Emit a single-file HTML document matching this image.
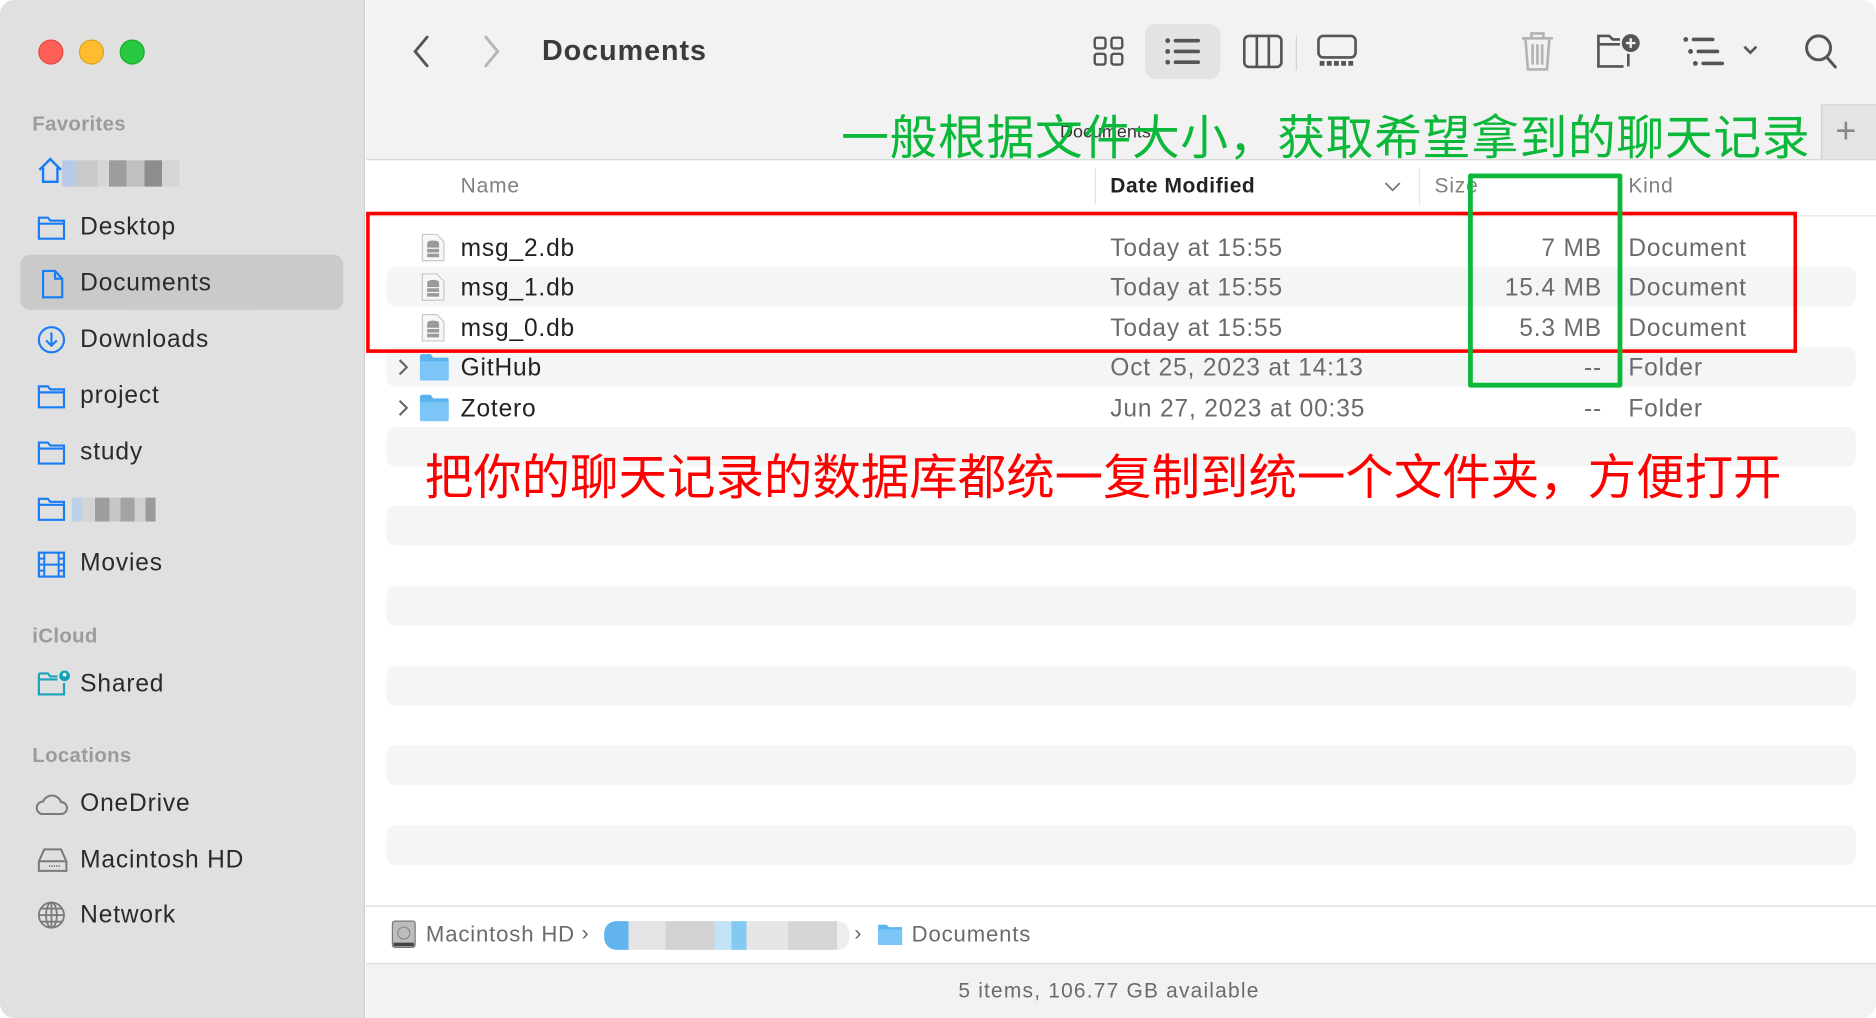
<!DOCTYPE html>
<html><head><meta charset="utf-8"><style>
*{margin:0;padding:0;box-sizing:border-box}
html,body{width:1876px;height:1018px;overflow:hidden;background:#fff}
#w{position:absolute;left:0;top:0;width:1568px;height:851px;transform:scale(1.19643,1.19624);transform-origin:0 0;font-family:"Liberation Sans","Noto Sans CJK SC",sans-serif;color:#222;border-radius:12px;overflow:hidden;background:#fff;letter-spacing:0.7px}
.a{position:absolute}
.sb{left:0;top:0;width:305px;height:851px;background:#e0e0e0;border-right:1px solid #d0d0d0}
.sec{position:absolute;left:27px;font-size:17px;color:#9b9b9b;font-weight:bold;letter-spacing:0.3px}
.it{position:absolute;left:67px;font-size:20.5px;color:#2a2a2a;line-height:24px}
.ic{position:absolute;left:31px}
.tb{left:306px;top:0;width:1262px;height:134px;background:#f2f2f2;border-bottom:1px solid #d6d6d6}
.hdr{font-size:17.5px;color:#808080;top:145px}
.row{position:absolute;left:323px;width:1228px;height:33px;border-radius:7px;background:#f4f5f5}
.t{position:absolute;font-size:20.5px;line-height:24px}
.g{color:#6b6b6b}
</style></head><body><div id="w">
<div class="a sb"></div>
<div class="a" style="left:32px;top:33px;width:21px;height:21px;border-radius:50%;background:#fe5f57;border:1px solid #e2463f"></div>
<div class="a" style="left:66px;top:33px;width:21px;height:21px;border-radius:50%;background:#febc2e;border:1px solid #dea123"></div>
<div class="a" style="left:100px;top:33px;width:21px;height:21px;border-radius:50%;background:#28c840;border:1px solid #1aab29"></div>

<div class="sec" style="top:94px">Favorites</div>
<svg class="ic" style="top:130px" width="22" height="24" viewBox="0 0 22 24"><path d="M2 12 L11 3 L20 12 M5 10 V22 H17 V10" fill="none" stroke="#1a7cf5" stroke-width="2"/></svg>
<div class="a" style="left:52px;top:134px;width:98px;height:22px;background:linear-gradient(90deg,#b8cbe6 0 12%,#c9c9c9 12% 30%,#d6d6d6 30% 40%,#9d9d9d 40% 55%,#c0c0c0 55% 70%,#8d8d8d 70% 85%,#d5d5d5 85%)"></div>
<div class="a" style="left:17px;top:213px;width:270px;height:46px;border-radius:8px;background:#cacaca"></div>
<svg class="ic" style="top:179px" width="24" height="22" viewBox="0 0 24 22"><path d="M1.5 3 H9 L11 5.5 H22.5 V20.5 H1.5 Z M1.5 8 H22.5" fill="none" stroke="#1a7cf5" stroke-width="1.8"/></svg>
<div class="it" style="top:178px">Desktop</div>
<svg class="ic" style="top:225px;left:34px" width="20" height="25" viewBox="0 0 20 25"><path d="M2 1.5 H12 L18 8 V23.5 H2 Z M12 1.5 V8 H18" fill="none" stroke="#1a7cf5" stroke-width="1.8"/></svg>
<div class="it" style="top:225px">Documents</div>
<svg class="ic" style="top:272px" width="24" height="24" viewBox="0 0 24 24"><circle cx="12" cy="12" r="10.5" fill="none" stroke="#1a7cf5" stroke-width="1.8"/><path d="M12 6 V17 M7.5 12.5 L12 17 L16.5 12.5" fill="none" stroke="#1a7cf5" stroke-width="1.8"/></svg>
<div class="it" style="top:272px">Downloads</div>
<svg class="ic" style="top:320px" width="24" height="22" viewBox="0 0 24 22"><path d="M1.5 3 H9 L11 5.5 H22.5 V20.5 H1.5 Z M1.5 8 H22.5" fill="none" stroke="#1a7cf5" stroke-width="1.8"/></svg>
<div class="it" style="top:319px">project</div>
<svg class="ic" style="top:367px" width="24" height="22" viewBox="0 0 24 22"><path d="M1.5 3 H9 L11 5.5 H22.5 V20.5 H1.5 Z M1.5 8 H22.5" fill="none" stroke="#1a7cf5" stroke-width="1.8"/></svg>
<div class="it" style="top:366px">study</div>
<svg class="ic" style="top:414px" width="24" height="22" viewBox="0 0 24 22"><path d="M1.5 3 H9 L11 5.5 H22.5 V20.5 H1.5 Z M1.5 8 H22.5" fill="none" stroke="#1a7cf5" stroke-width="1.8"/></svg>
<div class="a" style="left:60px;top:416px;width:70px;height:20px;background:linear-gradient(90deg,#bccfe9 0 12%,#d4d4d4 12% 28%,#9e9e9e 28% 45%,#c6c6c6 45% 58%,#a3a3a3 58% 75%,#d0d0d0 75% 88%,#9a9a9a 88%)"></div>
<svg class="ic" style="top:460px" width="24" height="24" viewBox="0 0 24 24"><rect x="1.5" y="2" width="21" height="20" fill="none" stroke="#1a7cf5" stroke-width="1.8"/><path d="M6 2 V22 M18 2 V22 M6 12 H18 M1.5 7 H6 M1.5 12 H6 M1.5 17 H6 M18 7 H22.5 M18 12 H22.5 M18 17 H22.5" stroke="#1a7cf5" stroke-width="1.6"/></svg>
<div class="it" style="top:459px">Movies</div>

<div class="sec" style="top:522px">iCloud</div>
<svg class="ic" style="top:560px" width="28" height="22" viewBox="0 0 28 22"><path d="M1.5 3 H9 L11 5.5 H17 M22.5 11 V20.5 H1.5 V3 M1.5 8 H17" fill="none" stroke="#16a3b9" stroke-width="1.8"/><circle cx="23" cy="5" r="4.5" fill="#16a3b9"/><circle cx="23" cy="4" r="1.5" fill="#fff"/></svg>
<div class="it" style="top:560px">Shared</div>

<div class="sec" style="top:622px">Locations</div>
<svg class="ic" style="top:662px;left:29px" width="28" height="20" viewBox="0 0 28 20"><path d="M6 18.5 H22 A5 5 0 0 0 22 8.5 A8 8 0 0 0 7 8 A5.3 5.3 0 0 0 6 18.5 Z" fill="none" stroke="#7a7a7a" stroke-width="1.7"/></svg>
<div class="it" style="top:660px">OneDrive</div>
<svg class="ic" style="top:708px" width="26" height="22" viewBox="0 0 26 22"><path d="M6 2 H20 L24.5 12 V20 H1.5 V12 Z M1.5 12 H24.5" fill="none" stroke="#7a7a7a" stroke-width="1.7"/><path d="M10 16 H20" stroke="#7a7a7a" stroke-width="1.5" stroke-dasharray="1 1"/></svg>
<div class="it" style="top:707px">Macintosh HD</div>
<svg class="ic" style="top:753px" width="24" height="24" viewBox="0 0 24 24"><g fill="none" stroke="#7a7a7a" stroke-width="1.5"><circle cx="12" cy="12" r="10.5"/><ellipse cx="12" cy="12" rx="4.5" ry="10.5"/><path d="M1.5 12 H22.5 M3.5 6.5 H20.5 M3.5 17.5 H20.5 M12 1.5 V22.5"/></g></svg>
<div class="it" style="top:753px">Network</div>

<!-- toolbar + tab -->
<div class="a tb"></div>
<svg class="a" style="left:343px;top:29px" width="18" height="28" viewBox="0 0 18 28"><path d="M14 2 L4 14 L14 26" fill="none" stroke="#555" stroke-width="2.4" stroke-linecap="round"/></svg>
<svg class="a" style="left:402px;top:29px" width="18" height="28" viewBox="0 0 18 28"><path d="M4 2 L14 14 L4 26" fill="none" stroke="#b5b5b5" stroke-width="2.4" stroke-linecap="round"/></svg>
<div class="a" style="left:453px;top:29px;font-size:24px;font-weight:bold;color:#3b3b3b;letter-spacing:0.8px">Documents</div>
<svg class="a" style="left:913px;top:30px" width="28" height="26" viewBox="0 0 28 26"><g fill="none" stroke="#555" stroke-width="2"><rect x="2" y="1.5" width="9" height="9" rx="2"/><rect x="16" y="1.5" width="9" height="9" rx="2"/><rect x="2" y="15" width="9" height="9" rx="2"/><rect x="16" y="15" width="9" height="9" rx="2"/></g></svg>
<div class="a" style="left:957px;top:20px;width:63px;height:46px;border-radius:9px;background:#e3e3e3"></div>
<svg class="a" style="left:972px;top:30px" width="34" height="26" viewBox="0 0 34 26"><g fill="#555"><circle cx="4" cy="4" r="2"/><circle cx="4" cy="13" r="2"/><circle cx="4" cy="22" r="2"/><rect x="9" y="2.5" width="22" height="3" rx="1.5"/><rect x="9" y="11.5" width="22" height="3" rx="1.5"/><rect x="9" y="20.5" width="22" height="3" rx="1.5"/></g></svg>
<svg class="a" style="left:1038px;top:28px" width="36" height="30" viewBox="0 0 36 30"><g fill="none" stroke="#555" stroke-width="2.2"><rect x="2" y="2" width="31" height="26" rx="4"/><path d="M12.5 2 V28 M22.5 2 V28"/></g></svg>
<div class="a" style="left:1083px;top:30px;width:1px;height:29px;background:#d2d2d2"></div>
<svg class="a" style="left:1100px;top:28px" width="36" height="30" viewBox="0 0 36 30"><g fill="none" stroke="#555" stroke-width="2.2"><rect x="2" y="2" width="31" height="18" rx="4"/></g><path d="M3 25 H33" stroke="#555" stroke-width="4" stroke-dasharray="4 2"/></svg>
<svg class="a" style="left:1270px;top:26px" width="30" height="34" viewBox="0 0 30 34"><g fill="none" stroke="#b3b3b3" stroke-width="2.2"><path d="M2 6 H28 M10 6 V2 H20 V6 M5 6 L7 32 H23 L25 6 M11 11 V28 M15 11 V28 M19 11 V28"/></g></svg>
<svg class="a" style="left:1334px;top:27px" width="38" height="32" viewBox="0 0 38 32"><g fill="none" stroke="#555" stroke-width="2.2"><path d="M23 28.5 H2 V3 H11 L14 6 H20 M2 10 H20 M27 18 V28.5"/><circle cx="29" cy="9" r="7.5" fill="#555" stroke="none"/><path d="M29 5 V13 M25 9 H33" stroke="#f2f2f2" stroke-width="2"/></g></svg>
<svg class="a" style="left:1406px;top:30px" width="64" height="26" viewBox="0 0 64 26"><g fill="#555"><circle cx="3" cy="3" r="2"/><circle cx="7" cy="13" r="2"/><circle cx="11" cy="23" r="2"/><rect x="8" y="1.5" width="19" height="3" rx="1.5"/><rect x="12" y="11.5" width="19" height="3" rx="1.5"/><rect x="16" y="21.5" width="19" height="3" rx="1.5"/></g><path d="M52 9 L57 14 L62 9" fill="none" stroke="#555" stroke-width="2.2"/></svg>
<svg class="a" style="left:1507px;top:27px" width="32" height="32" viewBox="0 0 32 32"><g fill="none" stroke="#555" stroke-width="2.5" stroke-linecap="round"><circle cx="13" cy="13" r="10"/><path d="M20 21 L27 29"/></g></svg>

<div class="a" style="left:1522px;top:87px;width:46px;height:46px;background:#e4e4e4;border-left:1px solid #d0d0d0;border-top:1px solid #d6d6d6"></div>
<div class="a" style="left:1534px;top:93px;font-size:30px;color:#888">+</div>
<div class="a" style="left:886px;top:102px;font-size:15px;color:#333;letter-spacing:0">Documents</div>

<!-- header -->
<div class="a hdr" style="left:385px">Name</div>
<div class="a" style="left:915px;top:141px;width:1px;height:30px;background:#e2e2e2"></div>
<div class="a hdr" style="left:928px;color:#222;font-weight:bold;letter-spacing:0.5px">Date Modified</div>
<svg class="a" style="left:1157px;top:151px" width="14" height="10" viewBox="0 0 14 10"><path d="M1 2 L7 8 L13 2" fill="none" stroke="#777" stroke-width="1.5"/></svg>
<div class="a" style="left:1186px;top:141px;width:1px;height:30px;background:#e2e2e2"></div>
<div class="a hdr" style="left:1199px">Size</div>
<div class="a hdr" style="left:1361px">Kind</div>
<div class="a" style="left:306px;top:180px;width:1262px;height:1px;background:#e4e4e4"></div>

<!-- stripes -->
<div class="row" style="top:223px"></div>
<div class="row" style="top:290px"></div>
<div class="row" style="top:357px"></div>
<div class="row" style="top:423px"></div>
<div class="row" style="top:490px"></div>
<div class="row" style="top:557px"></div>
<div class="row" style="top:623px"></div>
<div class="row" style="top:690px"></div>

<!-- rows -->
<svg class="a" style="left:352px;top:195px" width="20" height="24" viewBox="0 0 20 24"><path d="M1 1 H13 L19 7 V23 H1 Z" fill="#f7f7f7" stroke="#c8c8c8"/><g fill="#9a9a9a"><ellipse cx="10" cy="8" rx="5" ry="2"/><rect x="5" y="9" width="10" height="3"/><rect x="5" y="13" width="10" height="3"/><rect x="5" y="17" width="10" height="3"/></g></svg>
<svg class="a" style="left:352px;top:228px" width="20" height="24" viewBox="0 0 20 24"><path d="M1 1 H13 L19 7 V23 H1 Z" fill="#f7f7f7" stroke="#c8c8c8"/><g fill="#9a9a9a"><ellipse cx="10" cy="8" rx="5" ry="2"/><rect x="5" y="9" width="10" height="3"/><rect x="5" y="13" width="10" height="3"/><rect x="5" y="17" width="10" height="3"/></g></svg>
<svg class="a" style="left:352px;top:262px" width="20" height="24" viewBox="0 0 20 24"><path d="M1 1 H13 L19 7 V23 H1 Z" fill="#f7f7f7" stroke="#c8c8c8"/><g fill="#9a9a9a"><ellipse cx="10" cy="8" rx="5" ry="2"/><rect x="5" y="9" width="10" height="3"/><rect x="5" y="13" width="10" height="3"/><rect x="5" y="17" width="10" height="3"/></g></svg>
<div class="t" style="left:385px;top:196px">msg_2.db</div>
<div class="t" style="left:385px;top:229px">msg_1.db</div>
<div class="t" style="left:385px;top:263px">msg_0.db</div>
<div class="t" style="left:385px;top:296px">GitHub</div>
<div class="t" style="left:385px;top:330px">Zotero</div>
<svg class="a" style="left:332px;top:299px" width="10" height="16" viewBox="0 0 10 16"><path d="M2 2 L8 8 L2 14" fill="none" stroke="#666" stroke-width="1.8"/></svg>
<svg class="a" style="left:332px;top:333px" width="10" height="16" viewBox="0 0 10 16"><path d="M2 2 L8 8 L2 14" fill="none" stroke="#666" stroke-width="1.8"/></svg>
<svg class="a" style="left:350px;top:295px" width="26" height="24" viewBox="0 0 26 24"><path d="M1 3 Q1 1 3 1 H10 L12 4 H24 Q25 4 25 6 V22 Q25 23 24 23 H2 Q1 23 1 22 Z" fill="#5ab3ef"/><rect x="1" y="7" width="24" height="16" rx="1" fill="#7cc6f7"/></svg>
<svg class="a" style="left:350px;top:329px" width="26" height="24" viewBox="0 0 26 24"><path d="M1 3 Q1 1 3 1 H10 L12 4 H24 Q25 4 25 6 V22 Q25 23 24 23 H2 Q1 23 1 22 Z" fill="#5ab3ef"/><rect x="1" y="7" width="24" height="16" rx="1" fill="#7cc6f7"/></svg>
<div class="t g" style="left:928px;top:196px">Today at 15:55</div>
<div class="t g" style="left:928px;top:229px">Today at 15:55</div>
<div class="t g" style="left:928px;top:263px">Today at 15:55</div>
<div class="t g" style="left:928px;top:296px">Oct 25, 2023 at 14:13</div>
<div class="t g" style="left:928px;top:330px">Jun 27, 2023 at 00:35</div>
<div class="t g" style="right:229px;top:196px">7 MB</div>
<div class="t g" style="right:229px;top:229px">15.4 MB</div>
<div class="t g" style="right:229px;top:263px">5.3 MB</div>
<div class="t g" style="right:229px;top:296px">--</div>
<div class="t g" style="right:229px;top:330px">--</div>
<div class="t g" style="left:1361px;top:196px">Document</div>
<div class="t g" style="left:1361px;top:229px">Document</div>
<div class="t g" style="left:1361px;top:263px">Document</div>
<div class="t g" style="left:1361px;top:296px">Folder</div>
<div class="t g" style="left:1361px;top:330px">Folder</div>

<!-- annotations -->
<div class="a" style="left:306px;top:177px;width:1196px;height:118px;border:3.5px solid #ff0000"></div>
<div class="a" style="left:1227px;top:145px;width:129px;height:179px;border:4.5px solid #0cb83a;border-radius:2px"></div>
<div class="a" style="left:703px;top:88px;font-size:40px;line-height:48px;color:#0cb83a;font-family:'Noto Sans CJK SC',sans-serif;white-space:nowrap;letter-spacing:0.5px">一般根据文件大小，获取希望拿到的聊天记录</div>
<div class="a" style="left:355px;top:372px;font-size:40.5px;line-height:48px;color:#ff0000;font-family:'Noto Sans CJK SC',sans-serif;white-space:nowrap;letter-spacing:0">把你的聊天记录的数据库都统一复制到统一个文件夹，方便打开</div>

<!-- path bar -->
<div class="a" style="left:306px;top:757px;width:1262px;height:1px;background:#dcdcdc"></div>
<div class="a" style="left:306px;top:805px;width:1262px;height:46px;background:#f2f2f2;border-top:1px solid #dcdcdc"></div>
<svg class="a" style="left:327px;top:769px" width="21" height="24" viewBox="0 0 21 24"><rect x="1" y="1" width="19" height="22" rx="2" fill="#bdbdbd" stroke="#777"/><circle cx="10.5" cy="11" r="5" fill="none" stroke="#888"/><rect x="2" y="19" width="17" height="3" fill="#444"/></svg>
<div class="a" style="left:356px;top:770px;font-size:18.5px;color:#6b6b6b">Macintosh HD</div>
<div class="a" style="left:486px;top:770px;font-size:18px;color:#6b6b6b">›</div>
<div class="a" style="left:505px;top:770px;width:205px;height:24px;border-radius:10px;background:linear-gradient(90deg,#62b4ee 0 10%,#e4e4e4 10% 25%,#d2d2d2 25% 45%,#c2e2f7 45% 52%,#83c9f2 52% 58%,#e6e6e6 58% 75%,#d6d6d6 75% 95%,#eee 95%)"></div>
<div class="a" style="left:714px;top:770px;font-size:18px;color:#6b6b6b">›</div>
<svg class="a" style="left:733px;top:771px" width="22" height="20" viewBox="0 0 22 20"><path d="M1 2 H8 L10 4 H21 V19 H1 Z" fill="#5ab3ef"/><rect x="1" y="6" width="20" height="13" fill="#7cc6f7"/></svg>
<div class="a" style="left:762px;top:770px;font-size:18.5px;color:#6b6b6b">Documents</div>
<div class="a" style="left:801px;top:818px;font-size:17.5px;color:#6b6b6b;letter-spacing:1px">5 items, 106.77 GB available</div>
</div></body></html>
